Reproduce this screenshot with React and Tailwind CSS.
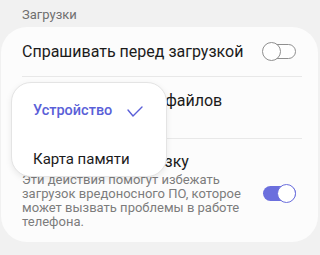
const Toggle = ({ on }) => (
    <div className="relative w-[34px] h-[19px] shrink-0">
        <div
            className={
                on
                    ? 'absolute left-[1px] right-0 top-[2px] bottom-[2px] rounded-full bg-[#6b6fdd]'
                    : 'absolute left-[1px] right-0 top-[2px] bottom-[2px] rounded-full border-[1.5px] border-[#8f8f8f] bg-white'
            }
        />
        <div
            className={
                on
                    ? 'absolute right-0 top-0 w-[19px] h-[19px] rounded-full bg-white border-[1.5px] border-[#6b6fdd]'
                    : 'absolute left-0 top-0 w-[19px] h-[19px] rounded-full bg-white border-[1.5px] border-[#8f8f8f]'
            }
        />
    </div>
);

const App = () => {
    return (
        <div className="relative w-[320px] h-[255px] overflow-hidden bg-[#f1f1f1]" style={{ fontFamily: 'Roboto, "Noto Sans", sans-serif' }}>
            <div className="h-[27px] pl-[22px] pt-[6px] text-[13px] leading-[18px] text-[#6f6f6f]">Загрузки</div>

            <div className="ml-[1px] w-[317px] h-[215px] rounded-[26px] bg-[#fcfcfc] pl-[21px] pr-[16px]">
                <div className="h-[50px] flex items-center justify-between border-b border-[#e8e8e8]">
                    <span className="text-[16px] leading-[20px] text-[#1b1b1b]">Спрашивать перед загрузкой</span>
                    <div className="mr-[6px]"><Toggle on={false} /></div>
                </div>

                <div className="h-[62px] pt-[14px] border-b border-[#e8e8e8]">
                    <div className="text-[16px] leading-[20px] text-[#1b1b1b]">Место сохранения файлов</div>
                </div>

                <div className="flex items-center justify-between pt-[13px]">
                    <div>
                        <div className="text-[16px] leading-[20px] text-[#1b1b1b]">Блокировать загрузку</div>
                        <div className="mt-[1px] text-[13px] leading-[14px] text-[#7c7c7c]">
                            Эти действия помогут избежать<br />
                            загрузок вредоносного ПО, которое<br />
                            может вызвать проблемы в работе<br />
                            телефона.
                        </div>
                    </div>
                    <div className="mr-[6px] mt-[5px]"><Toggle on /></div>
                </div>
            </div>

            {/* dropdown menu */}
            <div className="absolute left-[11px] top-[82px] w-[156px] h-[95px] rounded-[20px] bg-white border border-[#e4e4e4] shadow-[0_2px_6px_rgba(0,0,0,0.08)] pt-[4px] px-[21px]">
                <div className="h-[48px] flex items-center">
                    <span className="text-[14.5px] font-medium text-[#5a5fd8]">Устройство</span>
                    <svg className="ml-[15px]" width="16" height="11" viewBox="0 0 16 11" fill="none">
                        <polyline points="1,4 6,10 15,1" stroke="#5a5fd8" strokeWidth="1.4" strokeLinecap="round" strokeLinejoin="round" />
                    </svg>
                </div>
                <div className="h-[48px] flex items-center">
                    <span className="text-[15px] text-[#1b1b1b]">Карта памяти</span>
                </div>
            </div>
        </div>
    );
};

export default App;
